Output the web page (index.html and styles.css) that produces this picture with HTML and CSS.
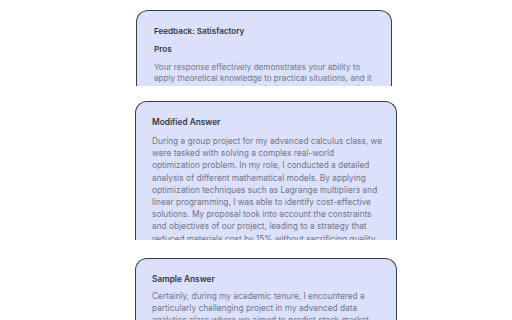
FILE: index.html
```html
<!DOCTYPE html>
<html>
<head>
<meta charset="utf-8">
<link rel="stylesheet" href="styles.css">
</head>
<body>
<div class="stack">
  <section class="card card-feedback">
    <h3 class="card-title">Feedback: Satisfactory</h3>
    <h4 class="card-sub">Pros</h4>
    <p class="card-text">Your response effectively demonstrates your ability to apply theoretical knowledge to practical situations, and it showcases your analytical thinking and problem-solving skills in a team setting.</p>
  </section>
  <section class="card card-modified">
    <h3 class="card-title">Modified Answer</h3>
    <p class="card-text">During a group project for my advanced calculus class, we were tasked with solving a complex real-world optimization problem. In my role, I conducted a detailed analysis of different mathematical models. By applying optimization techniques such as Lagrange multipliers and linear programming, I was able to identify cost-effective solutions. My proposal took into account the constraints and objectives of our project, leading to a strategy that reduced materials cost by 15% without sacrificing quality.</p>
  </section>
  <section class="card card-sample">
    <h3 class="card-title">Sample Answer</h3>
    <p class="card-text">Certainly, during my academic tenure, I encountered a particularly challenging project in my advanced data analytics class where we aimed to predict stock market trends using historical data.</p>
  </section>
</div>
</body>
</html>
```
FILE: styles.css
```css
html, body {
  margin: 0;
  padding: 0;
  background: #ffffff;
  height: 320px;
  overflow: hidden;
}
body {
  font-family: Inter, "Noto Sans", sans-serif;
}
.stack {
  display: flex;
  flex-direction: column;
  align-items: flex-start;
  padding-top: 10px;
}
.card {
  box-sizing: border-box;
  background: #dbe1fb;
  border: 1px solid #3a3d4a;
  border-bottom: none;
  border-radius: 12px 12px 0 0;
  overflow: hidden;
  padding: 14px 14px 0 16px;
}
.card-feedback {
  margin-left: 136px;
  width: 256px;
  height: 76px;
  padding-left: 17px;
}
.card-modified {
  margin-left: 135px;
  margin-top: 15px;
  width: 262px;
  height: 139px;
}
.card-sample {
  margin-left: 135px;
  margin-top: 18px;
  width: 262px;
  height: 80px;
}
.card-title, .card-sub {
  margin: 0;
  font-size: 8.3px;
  line-height: 12px;
  font-weight: 600;
  color: #343845;
}
.card-sub {
  margin-top: 6px;
}
.card-title + .card-text, .card-sub + .card-text {
  margin-top: 7px;
}
.card-sample .card-title + .card-text {
  margin-top: 5px;
}
.card-text {
  margin: 0;
  font-size: 8.3px;
  line-height: 12.2px;
  color: #727687;
}
.card-feedback .card-title,
.card-feedback .card-sub {
  font-size: 8.1px;
}
.card-feedback .card-text {
  font-size: 8.1px;
  line-height: 11px;
}
```
